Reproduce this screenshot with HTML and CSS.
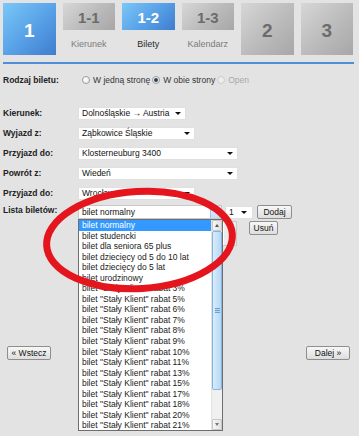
FILE: index.html
```html
<!DOCTYPE html>
<html lang="pl">
<head>
<meta charset="utf-8">
<title>Bilety</title>
<link rel="stylesheet" href="styles.css">
</head>
<body>
<div class="page">
  <div class="steps">
    <div class="step step-big step-active"><span>1</span></div>
    <div class="step-col">
      <div class="step step-small"><span>1-1</span></div>
      <div class="step-label">Kierunek</div>
    </div>
    <div class="step-col">
      <div class="step step-small step-active"><span>1-2</span></div>
      <div class="step-label current">Bilety</div>
    </div>
    <div class="step-col">
      <div class="step step-small"><span>1-3</span></div>
      <div class="step-label">Kalendarz</div>
    </div>
    <div class="step step-big"><span>2</span></div>
    <div class="step step-big"><span>3</span></div>
  </div>
  <div class="rule"></div>

  <div class="form">
    <div class="row row-type">
      <div class="label">Rodzaj biletu:</div>
      <div class="radios">
        <span class="radio"><span class="circle"></span>W jedną stronę</span>
        <span class="radio"><span class="circle checked"></span>W obie strony</span>
        <span class="radio disabled"><span class="circle"></span>Open</span>
      </div>
    </div>

    <div class="row row-dir">
      <div class="label">Kierunek:</div>
      <div class="select w108"><span class="val">Dolnośląskie → Austria</span><span class="arrow"></span></div>
    </div>
    <div class="row">
      <div class="label">Wyjazd z:</div>
      <div class="select w117"><span class="val">Ząbkowice Śląskie</span><span class="arrow"></span></div>
    </div>
    <div class="row">
      <div class="label">Przyjazd do:</div>
      <div class="select w160"><span class="val">Klosterneuburg 3400</span><span class="arrow"></span></div>
    </div>
    <div class="row">
      <div class="label">Powrót z:</div>
      <div class="select w160"><span class="val">Wiedeń</span><span class="arrow"></span></div>
    </div>
    <div class="row">
      <div class="label">Przyjazd do:</div>
      <div class="select w117"><span class="val">Wrocław</span><span class="arrow"></span></div>
    </div>

    <div class="row row-list">
      <div class="label">Lista biletów:</div>
      <div class="list-ctrl">
        <div class="list-line">
          <div class="select w144 open"><span class="val">bilet normalny</span><span class="drop-btn"></span></div>
          <div class="select w28"><span class="val">1</span><span class="arrow"></span></div>
          <button class="btn btn-dodaj" type="button">Dodaj</button>
        </div>
        <div class="list-line2">
          <div class="listbox"><div class="lb-sb"><span class="up-tri"></span></div></div>
          <button class="btn btn-usun" type="button">Usuń</button>
        </div>

        <div class="dropdown">
          <ul class="items">
            <li class="sel">bilet normalny</li>
            <li>bilet studencki</li>
            <li>bilet dla seniora 65 plus</li>
            <li>bilet dziecięcy od 5 do 10 lat</li>
            <li>bilet dziecięcy do 5 lat</li>
            <li>bilet urodzinowy</li>
            <li>bilet "Stały Klient" rabat 3%</li>
            <li>bilet "Stały Klient" rabat 5%</li>
            <li>bilet "Stały Klient" rabat 6%</li>
            <li>bilet "Stały Klient" rabat 7%</li>
            <li>bilet "Stały Klient" rabat 8%</li>
            <li>bilet "Stały Klient" rabat 9%</li>
            <li>bilet "Stały Klient" rabat 10%</li>
            <li>bilet "Stały Klient" rabat 11%</li>
            <li>bilet "Stały Klient" rabat 13%</li>
            <li>bilet "Stały Klient" rabat 15%</li>
            <li>bilet "Stały Klient" rabat 17%</li>
            <li>bilet "Stały Klient" rabat 18%</li>
            <li>bilet "Stały Klient" rabat 20%</li>
            <li>bilet "Stały Klient" rabat 21%</li>
          </ul>
          <div class="scrollbar">
            <div class="sb-btn"><span class="up-tri"></span></div>
            <div class="sb-thumb"><span class="grip"></span></div>
            <div class="sb-track"></div>
            <div class="sb-btn"><span class="down-tri"></span></div>
          </div>
        </div>
      </div>
    </div>

    <div class="nav">
      <button class="btn btn-nav" type="button">« Wstecz</button>
      <button class="btn btn-nav" type="button">Dalej »</button>
    </div>
  </div>

  <svg class="annot" width="359" height="436" viewBox="0 0 359 436">
    <ellipse cx="139.5" cy="240" rx="93" ry="48.5" transform="rotate(-3.5 139.5 240)" fill="none" stroke="#e5151d" stroke-width="7"/>
  </svg>
</div>
</body>
</html>
```

FILE: styles.css
```css
* { box-sizing: border-box; }

body {
  margin: 0;
  background: #e3e3e3;
  font-family: "Liberation Sans", Arial, sans-serif;
  font-size: 8.5px;
  color: #111;
}

.page {
  position: relative;
  width: 359px;
  height: 436px;
  overflow: hidden;
}

/* ---------- steps ---------- */
.steps {
  display: flex;
  gap: 7px;
  padding: 3px 0 0 3px;
  height: 55px;
}

.step-col {
  display: flex;
  flex-direction: column;
  width: 52.5px;
}

.step {
  display: flex;
  align-items: center;
  justify-content: center;
  width: 52.5px;
  font-weight: bold;
  color: #6c6c6c;
  background: linear-gradient(135deg, #d7d7d7 0%, #bdbdbd 50%, #a7a7a7 100%);
}

.step-big {
  height: 52px;
  font-size: 19px;
  padding-top: 3px;
}

.step-small {
  height: 27px;
  font-size: 15px;
  padding-top: 1px;
}

.step-active {
  color: #fff;
  background: linear-gradient(135deg, #7bc7f7 0%, #5aa3e8 50%, #3e7dcf 100%);
}

.step-label {
  margin-top: 9px;
  text-align: center;
  font-size: 9px;
  line-height: 11px;
  color: #7b7b7b;
}

.step-label.current { color: #2a2a2a; }

.rule {
  height: 2px;
  margin: 7px 5px 0 3px;
  background: #4f8fd7;
}

/* ---------- form ---------- */
.form {
  padding: 0 3px;
}

.row {
  display: flex;
  align-items: center;
  height: 20px;
}

.row-type { margin-top: 6px; }
.row-dir { margin-top: 13px; }

.label {
  flex: none;
  width: 75px;
  font-weight: bold;
  color: #222;
  line-height: 11px;
}

.radios {
  display: flex;
  align-items: center;
  padding-left: 4px;
  gap: 2px;
  color: #333;
}

.radio {
  display: flex;
  align-items: center;
  gap: 3px;
  line-height: 11px;
}

.circle {
  width: 8px;
  height: 8px;
  border-radius: 50%;
  border: 1px solid #9c9c9c;
  background: radial-gradient(circle at 35% 35%, #ffffff 0%, #e6e6e6 100%);
  display: flex;
  align-items: center;
  justify-content: center;
}

.circle.checked::after {
  content: "";
  width: 4px;
  height: 4px;
  border-radius: 50%;
  background: #2b3f5a;
}

.radio.disabled { color: #a8a8a8; }
.radio.disabled .circle {
  border-color: #cdcdcd;
  background: #ededed;
}

.select {
  flex: none;
  display: flex;
  align-items: center;
  justify-content: space-between;
  height: 13px;
  padding: 0 4px 0 3px;
  background: #fff;
  border: 1px solid #e0e0e0;
  line-height: 11px;
  white-space: nowrap;
  color: #111;
}

.arrow {
  flex: none;
  width: 0;
  height: 0;
  border-left: 3px solid transparent;
  border-right: 3px solid transparent;
  border-top: 3px solid #111;
  margin-top: 1px;
}

.w108 { width: 108px; }
.w117 { width: 117px; }
.w160 { width: 160px; }
.w144 { width: 144px; }
.w28 { width: 28px; padding-right: 5px; }

/* ---------- ticket list ---------- */
.row-list {
  align-items: flex-start;
  height: auto;
  padding-top: 2px;
}

.list-ctrl {
  position: relative;
  width: 220px;
}

.list-line {
  display: flex;
  align-items: center;
  gap: 3px;
}

.list-line2 {
  display: grid;
  grid-template-columns: 159px 29px;
  column-gap: 12px;
  align-items: start;
  margin-top: 2px;
}

.select.open {
  height: 14px;
  padding-right: 0;
  border-color: #c9c9c9;
}

.drop-btn {
  align-self: stretch;
  width: 11px;
  background: linear-gradient(#e4f1fc, #c6e0f6);
  border-left: 1px solid #9fc3e6;
}

.btn {
  flex: none;
  font-family: "Liberation Sans", Arial, sans-serif;
  font-size: 8.5px;
  line-height: 11px;
  color: #111;
  height: 14px;
  padding: 0;
  margin: 0;
  background: linear-gradient(#f7f7f7, #dedede);
  border: 1px solid #8e8e8e;
  border-radius: 2px;
  text-align: center;
}

.btn-dodaj { margin-left: 1px; width: 35px; }

.listbox {
  height: 25px;
  background: #fff;
  border: 1px solid #c9c9c9;
  display: flex;
  justify-content: flex-end;
}

.lb-sb {
  width: 12px;
  background: #ececec;
  display: flex;
  justify-content: center;
  padding-top: 4px;
}

.btn-usun { width: 29px; }

.dropdown {
  position: absolute;
  top: 14px;
  left: 0;
  width: 145px;
  height: 212px;
  display: flex;
  background: #fff;
  border: 1px solid #6e6e6e;
  z-index: 2;
}

.items {
  list-style: none;
  margin: 0;
  padding: 0;
  flex: 1;
}

.items li {
  height: 10.55px;
  line-height: 10.55px;
  padding-left: 3px;
  white-space: nowrap;
  color: #1a1a1a;
}

.items li.sel {
  background: #3399ff;
  color: #fff;
}

.scrollbar {
  width: 11px;
  display: flex;
  flex-direction: column;
  background: #f0f0f0;
  border-left: 1px solid #e2e2e2;
}

.sb-btn {
  height: 11px;
  display: flex;
  align-items: center;
  justify-content: center;
  background: linear-gradient(90deg, #f6f6f6, #e2e2e2);
  border: 1px solid #c8c8c8;
  border-radius: 1px;
}

.up-tri {
  width: 0;
  height: 0;
  border-left: 2px solid transparent;
  border-right: 2px solid transparent;
  border-bottom: 3px solid #555;
}

.down-tri {
  width: 0;
  height: 0;
  border-left: 2px solid transparent;
  border-right: 2px solid transparent;
  border-top: 3px solid #777;
}

.sb-thumb {
  height: 159px;
  display: flex;
  align-items: center;
  justify-content: center;
  background: linear-gradient(90deg, #d9ecfb, #b6d8f5);
  border: 1px solid #86b5e2;
  border-radius: 2px;
}

.grip {
  width: 5px;
  height: 5px;
  border-top: 1px solid #6f9fcf;
  border-bottom: 1px solid #6f9fcf;
  background: linear-gradient(#b6d8f5 0 40%, #6f9fcf 40% 60%, #b6d8f5 60%);
}

.sb-track { flex: 1; }

/* ---------- navigation ---------- */
.nav {
  display: flex;
  justify-content: space-between;
  padding: 0 6px 0 4px;
  margin-top: 100px;
}

.btn-nav { width: 44px; }

/* ---------- annotation ---------- */
.annot {
  position: absolute;
  left: 0;
  top: 0;
  pointer-events: none;
  z-index: 3;
}
```
